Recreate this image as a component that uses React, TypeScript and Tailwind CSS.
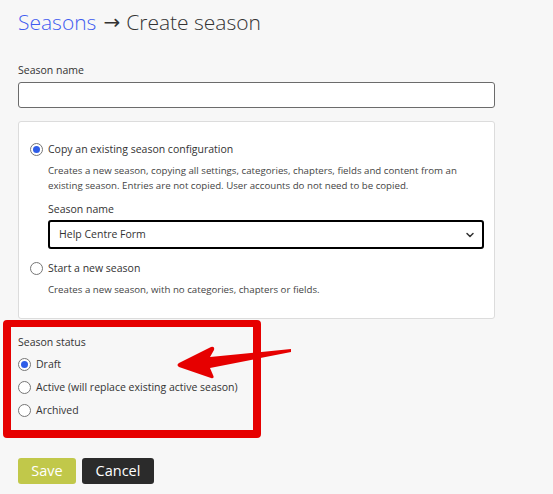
import { ChevronDown } from "lucide-react";

function Radio({ checked }: { checked?: boolean }) {
  return (
    <span className="flex h-[13px] w-[13px] shrink-0 items-center justify-center rounded-full border border-[#767676] bg-white">
      {checked && <span className="h-[7px] w-[7px] rounded-full bg-[#2f5de8]" />}
    </span>
  );
}

export default function App() {
  return (
    <div className="relative h-[494px] w-[553px] overflow-hidden bg-[#f7f7f7] font-['Open_Sans',sans-serif] text-[#333]">
      <div className="px-[18px] pt-[6px]">
        {/* Title */}
        <h1 className="flex items-center text-[21px] font-light leading-[32px] text-[#333]">
          <span className="text-[#3f5cf0]">Seasons</span>
          <span className="ml-[7px] mr-[6px] font-['DejaVu_Sans',sans-serif] text-[20px] font-normal">→</span>
          <span>Create season</span>
        </h1>

        {/* Season name */}
        <label className="mt-[25px] block text-[10.5px] leading-[14px]">Season name</label>
        <div className="mt-[5px] h-[26px] w-[477px] rounded-[3px] border border-[#6b6b6b] bg-white" />

        {/* Config card */}
        <div className="mt-[13px] w-[477px] rounded-[3px] border border-[#dcdcdc] bg-white px-[11px] pb-[21px] pt-[19px]">
          <div className="flex items-center gap-[5px]">
            <Radio checked />
            <span className="text-[10.5px] leading-[16px]">Copy an existing season configuration</span>
          </div>
          <p className="mt-[6px] pl-[18px] text-[9.7px] leading-[15px] text-[#444]">
            Creates a new season, copying all settings, categories, chapters, fields and content from an existing season.
            Entries are not copied. User accounts do not need to be copied.
          </p>
          <div className="pl-[18px]">
            <label className="mt-[9px] block text-[10.5px] leading-[14px]">Season name</label>
            <div className="mt-[4px] flex h-[29px] w-[436px] items-center justify-between rounded-[3px] border-2 border-black bg-white pl-[9px] pr-[6px]">
              <span className="text-[10.5px]">Help Centre Form</span>
              <ChevronDown size={12} strokeWidth={3} />
            </div>
          </div>
          <div className="mt-[11px] flex items-center gap-[5px]">
            <Radio />
            <span className="text-[10.5px] leading-[16px]">Start a new season</span>
          </div>
          <p className="mt-[6px] pl-[18px] text-[9.7px] leading-[15px] text-[#444]">
            Creates a new season, with no categories, chapters or fields.
          </p>
        </div>

        {/* Season status */}
        <div className="mt-[16px]">
          <label className="block text-[10.5px] leading-[14px]">Season status</label>
          <div className="mt-[7px] flex flex-col gap-[7px]">
            <div className="flex items-center gap-[5px]">
              <Radio checked />
              <span className="text-[10.5px] leading-[16px]">Draft</span>
            </div>
            <div className="flex items-center gap-[5px]">
              <Radio />
              <span className="text-[10.5px] leading-[16px]">Active (will replace existing active season)</span>
            </div>
            <div className="flex items-center gap-[5px]">
              <Radio />
              <span className="text-[10.5px] leading-[16px]">Archived</span>
            </div>
          </div>
        </div>

        {/* Buttons */}
        <div className="mt-[40px] flex gap-[6px]">
          <button className="h-[26px] w-[58px] rounded-[3px] bg-[#c1c84a] text-[14.5px] text-white">Save</button>
          <button className="h-[26px] w-[72px] rounded-[3px] bg-[#2b2b2b] text-[14.5px] text-white">Cancel</button>
        </div>
      </div>

      {/* Annotation box */}
      <div className="absolute left-[3px] top-[320px] h-[118px] w-[258px] rounded-[4px] border-[8px] border-t-[7px] border-[#e60000]" />

      {/* Annotation arrow */}
      <svg className="absolute left-[170px] top-[340px]" width="125" height="40" viewBox="0 0 125 40">
        <path
          d="M121 9 L40 17 L44 10 Q45 6 41 7 L9 23 Q6 25 9 27 L41 38 Q45 39 43 35 L40 28 L121 12 Z"
          fill="#e60000"
        />
      </svg>
    </div>
  );
}
